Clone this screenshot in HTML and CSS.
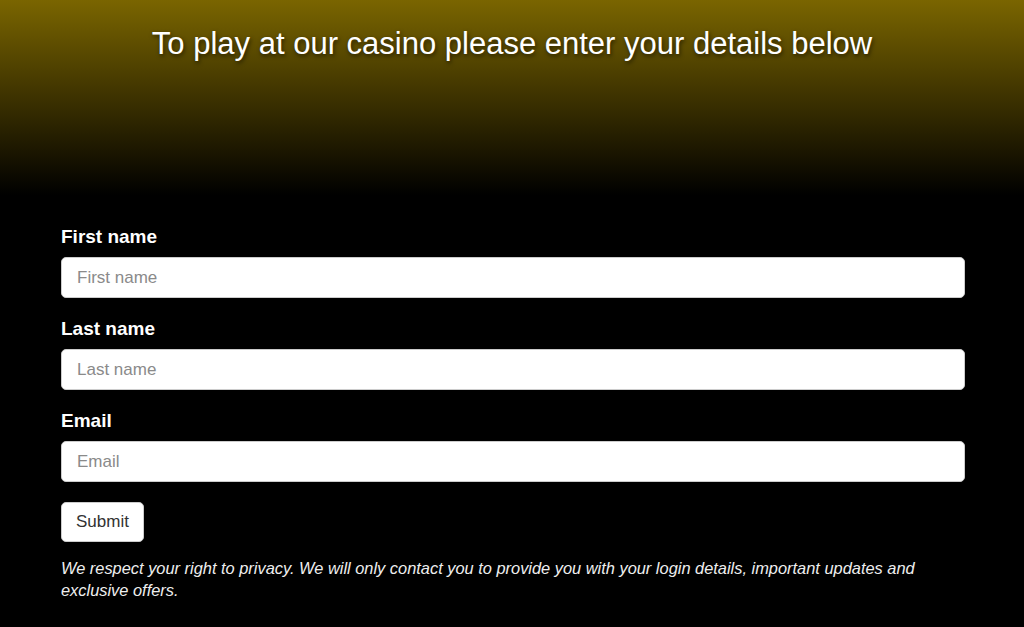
FILE: index.html
```html
<!doctype html>
<html lang="en">
<head>
    <meta charset="UTF-8">
    <title>Casino sign up</title>
    <link rel="stylesheet" href="styles.css">
</head>
<body>
<div class="top">
    <h1>To play at our casino please enter your details below</h1>
</div>
<form class="signup">
    <div class="field">
        <label for="fname">First name</label>
        <input type="text" id="fname" placeholder="First name">
    </div>
    <div class="field">
        <label for="lname">Last name</label>
        <input type="text" id="lname" placeholder="Last name">
    </div>
    <div class="field">
        <label for="email">Email</label>
        <input type="email" id="email" placeholder="Email">
    </div>
    <button type="button" class="btn">Submit</button>
    <p class="privacy">We respect your right to privacy. We will only contact you to provide you with your login details, important updates and exclusive offers.</p>
</form>
</body>
</html>
```

FILE: styles.css
```css
*{
    margin: 0;
    padding: 0;
    box-sizing: border-box;
}
body{
    background: #000;
    color: #fff;
    font-family: "Liberation Sans", Arial, sans-serif;
}
.top{
    height: 195px;
    padding-top: 26px;
    background: linear-gradient(to bottom, #7a6500 0%, #3d3200 50%, #000 100%);
    text-align: center;
}
.top h1{
    font-size: 31px;
    font-weight: normal;
    line-height: 36px;
    text-shadow: 1px 2px 4px rgba(0,0,0,0.6);
}
.signup{
    width: 904px;
    margin-left: 61px;
    padding-top: 31px;
}
.field{
    margin-bottom: 20px;
}
.field label{
    display: block;
    font-size: 19px;
    font-weight: bold;
    line-height: 22px;
    margin-bottom: 9px;
}
.field input{
    display: block;
    width: 100%;
    height: 41px;
    padding: 0 15px;
    border: 1px solid #ccc;
    border-radius: 5px;
    font-family: inherit;
    font-size: 17px;
    color: #333;
    background: #fff;
}
.field input::placeholder{
    color: #8a8a8a;
}
.btn{
    display: block;
    width: 83px;
    height: 40px;
    border: 1px solid #ccc;
    border-radius: 5px;
    background: #fff;
    color: #333;
    font-family: inherit;
    font-size: 17px;
    cursor: pointer;
}
.privacy{
    margin-top: 15px;
    font-size: 16.4px;
    font-style: italic;
    line-height: 22px;
    color: #eee;
}
```
